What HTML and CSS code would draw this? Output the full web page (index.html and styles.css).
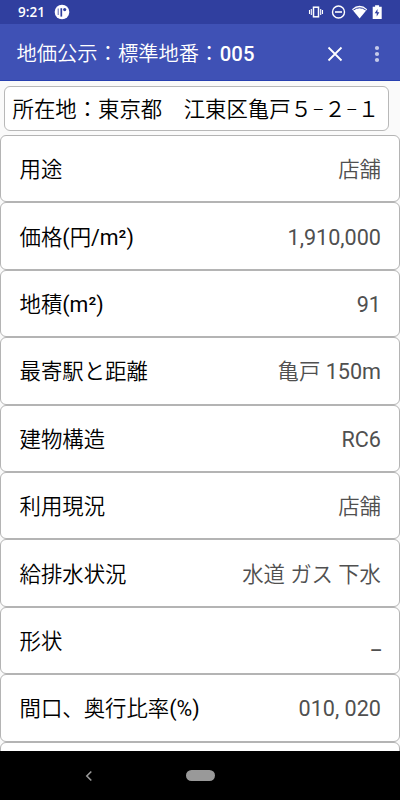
FILE: index.html
```
<!DOCTYPE html>
<html lang="ja">
<head>
<meta charset="utf-8">
<title>地価公示</title>
<link rel="stylesheet" href="styles.css">
</head>
<body>
<div class="screen">
  <header class="status">
    <span class="clock">9:21</span>
    <svg class="notice" width="16" height="16" viewBox="0 0 16 16"><circle cx="8" cy="8" r="7.3" fill="#fff"/><path d="M4.2 4.5v6.5" fill="none" stroke="#303f9f" stroke-width=".8"/><path d="M7.3 4.2v8.4" fill="none" stroke="#303f9f" stroke-width="1.7"/><circle cx="10.7" cy="5.6" r="1.6" fill="#303f9f"/></svg>
    <svg class="system" width="76" height="16" viewBox="0 0 76 16" fill="none" stroke="#fff">
      <path d="M1.5 6v4M3.3 5v6M12.7 5v6M14.5 6v4" stroke-width="1.1"/><rect x="5.5" y="3.2" width="5" height="9.6" stroke-width="1.5"/>
      <circle cx="30.5" cy="8" r="6" stroke-width="1.4"/><path d="M27 8h7" stroke-width="1.6"/>
      <path d="M44 5.2Q51.5-1.6 59.2 5.2L51.6 14.4z" fill="#fff" stroke="none"/><path d="M45.4 6Q51.6 1.6 57.8 6" stroke="#303f9f" stroke-width="1"/>
      <path d="M64.7 2.8h2.4V1.2h4v1.6h2.6v12.2h-9z" fill="#fff" stroke="none"/><path d="M69.5 5 66.7 9.2h2v3.2l2.7-4.2h-1.9z" fill="#303f9f" stroke="none"/>
    </svg>
  </header>
  <div class="toolbar">
    <h1 class="title">地価公示：標準地番：<b>005</b></h1>
    <svg class="close" width="16" height="16" viewBox="0 0 16 16"><path d="M1.5 1.5l13 13M14.5 1.5l-13 13" stroke="#fff" stroke-width="1.8"/></svg>
    <svg class="more" width="6" height="18" viewBox="0 0 6 18" fill="#c5cae9"><circle cx="3" cy="3" r="2.1"/><circle cx="3" cy="9" r="2.1"/><circle cx="3" cy="15" r="2.1"/></svg>
  </div>
  <main class="content">
    <div class="address">所在地：東京都　江東区亀戸５−２−１</div>
    <div class="list">
      <div class="row"><span>用途</span><span class="value">店舗</span></div>
      <div class="row"><span>価格<i>(</i>円<i>/m²)</i></span><span class="value"><i>1,910,000</i></span></div>
      <div class="row"><span>地積<i>(m²)</i></span><span class="value"><i>91</i></span></div>
      <div class="row"><span>最寄駅と距離</span><span class="value">亀戸<i> 150m</i></span></div>
      <div class="row"><span>建物構造</span><span class="value"><i>RC6</i></span></div>
      <div class="row"><span>利用現況</span><span class="value">店舗</span></div>
      <div class="row"><span>給排水状況</span><span class="value">水道 ガス 下水</span></div>
      <div class="row"><span>形状</span><span class="value"><i>_</i></span></div>
      <div class="row"><span>間口、奥行比率<i>(%)</i></span><span class="value"><i>010, 020</i></span></div>
      <div class="row"></div>
    </div>
  </main>
  <nav class="navbar">
    <svg class="back" width="8" height="12" viewBox="0 0 8 12"><path d="M6.3 1.5 1.8 6l4.5 4.5" fill="none" stroke="#999" stroke-width="1.6"/></svg>
    <span class="home"></span>
  </nav>
</div>
</body>
</html>
```
FILE: styles.css
```
* { box-sizing: border-box; }
body { margin: 0; font-family: Roboto, "Noto Sans CJK JP", sans-serif; }
i { font-style: normal; font-weight: 400; }
.screen { width: 400px; height: 800px; display: flex; flex-direction: column; overflow: hidden; background: #fafafa; }
.status { height: 24px; flex: none; display: flex; align-items: center; padding: 0 16px 0 18px; background: #303f9f; color: #fff; }
.clock { width: 36px; font-family: "Open Sans", sans-serif; font-size: 13.5px; font-weight: 600; line-height: 20px; }
.system { margin-left: auto; }
.toolbar { height: 57px; flex: none; display: flex; align-items: center; padding: 3px 20px 0 16px; background: #3f51b5; border-bottom: 1px solid #2941b0; color: #fff; }
.title { margin: 1px 0 0 0.5px; flex: 1; font-size: 20.3px; font-weight: 350; line-height: 30px; white-space: nowrap; }
.title b { margin-left: 0.5px; font-weight: 500; }
.close { margin-right: 31.5px; }
.content { flex: 1; min-height: 0; overflow: hidden; padding-top: 5px; }
.address { width: 385px; height: 45px; margin: 0 0 4px 4px; padding: 1px 0 0 7.5px; border: 1px solid #b8b8b8; border-radius: 6px; background: #fff; color: #000; font-size: 21.4px; font-weight: 350; line-height: 43px; white-space: nowrap; }
.row { height: 67.4px; display: flex; align-items: center; justify-content: space-between; padding: 3px 18px 0 18.5px; border: 1px solid #b4b4b4; border-radius: 6px; background: #fff; color: #000; font-size: 21.4px; font-weight: 350; line-height: 32px; white-space: nowrap; }
.value { color: #505050; }
.value i { font-size: 21.6px; }
.navbar { height: 49px; flex: none; display: flex; align-items: center; padding-left: 85px; background: #000; }
.home { width: 29px; height: 11px; margin-left: 93px; border-radius: 6px; background: #999; }
```
